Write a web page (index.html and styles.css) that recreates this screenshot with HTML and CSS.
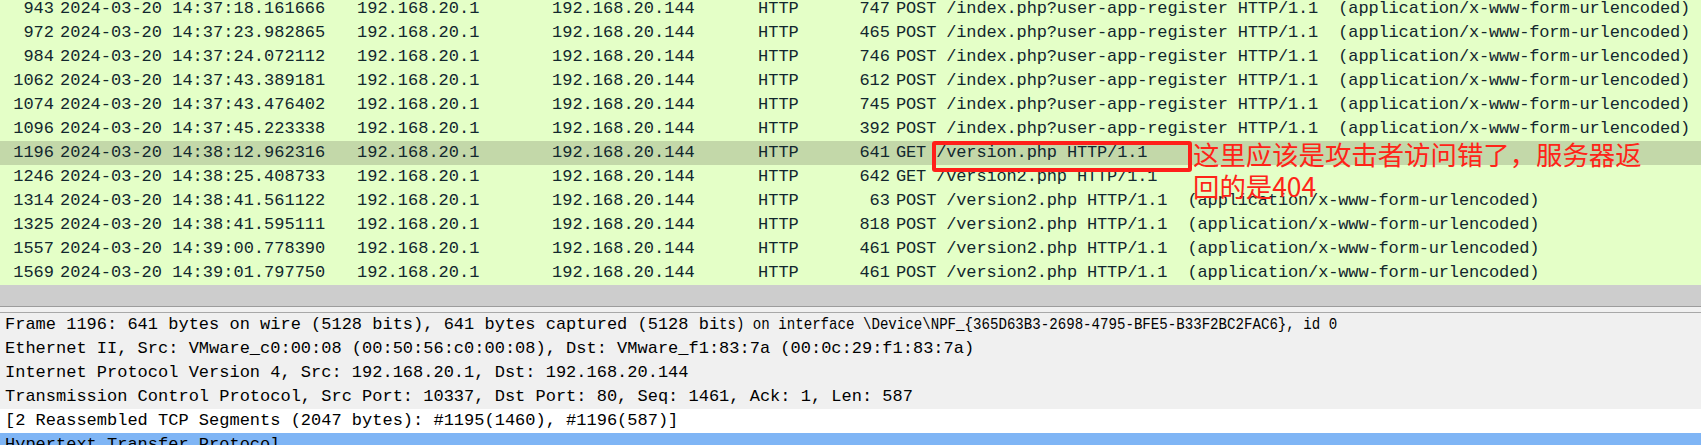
FILE: index.html
```html
<!DOCTYPE html>
<html lang="zh-CN">
<head>
<meta charset="utf-8">
<title>Wireshark</title>
<link rel="stylesheet" href="styles.css">
</head>
<body>
<div class="window">
  <div class="packet-list">
    <div class="rows">
      <div class="row"><span class="no">943</span><span class="time">2024-03-20 14:37:18.161666</span><span>192.168.20.1</span><span>192.168.20.144</span><span>HTTP</span><span class="len">747</span><span class="info">POST /index.php?user-app-register HTTP/1.1  (application/x-www-form-urlencoded)</span></div>
      <div class="row"><span class="no">972</span><span class="time">2024-03-20 14:37:23.982865</span><span>192.168.20.1</span><span>192.168.20.144</span><span>HTTP</span><span class="len">465</span><span class="info">POST /index.php?user-app-register HTTP/1.1  (application/x-www-form-urlencoded)</span></div>
      <div class="row"><span class="no">984</span><span class="time">2024-03-20 14:37:24.072112</span><span>192.168.20.1</span><span>192.168.20.144</span><span>HTTP</span><span class="len">746</span><span class="info">POST /index.php?user-app-register HTTP/1.1  (application/x-www-form-urlencoded)</span></div>
      <div class="row"><span class="no">1062</span><span class="time">2024-03-20 14:37:43.389181</span><span>192.168.20.1</span><span>192.168.20.144</span><span>HTTP</span><span class="len">612</span><span class="info">POST /index.php?user-app-register HTTP/1.1  (application/x-www-form-urlencoded)</span></div>
      <div class="row"><span class="no">1074</span><span class="time">2024-03-20 14:37:43.476402</span><span>192.168.20.1</span><span>192.168.20.144</span><span>HTTP</span><span class="len">745</span><span class="info">POST /index.php?user-app-register HTTP/1.1  (application/x-www-form-urlencoded)</span></div>
      <div class="row"><span class="no">1096</span><span class="time">2024-03-20 14:37:45.223338</span><span>192.168.20.1</span><span>192.168.20.144</span><span>HTTP</span><span class="len">392</span><span class="info">POST /index.php?user-app-register HTTP/1.1  (application/x-www-form-urlencoded)</span></div>
      <div class="row selected"><span class="no">1196</span><span class="time">2024-03-20 14:38:12.962316</span><span>192.168.20.1</span><span>192.168.20.144</span><span>HTTP</span><span class="len">641</span><span class="info">GET /version.php HTTP/1.1</span></div>
      <div class="row"><span class="no">1246</span><span class="time">2024-03-20 14:38:25.408733</span><span>192.168.20.1</span><span>192.168.20.144</span><span>HTTP</span><span class="len">642</span><span class="info">GET /version2.php HTTP/1.1</span></div>
      <div class="row"><span class="no">1314</span><span class="time">2024-03-20 14:38:41.561122</span><span>192.168.20.1</span><span>192.168.20.144</span><span>HTTP</span><span class="len">63</span><span class="info">POST /version2.php HTTP/1.1  (application/x-www-form-urlencoded)</span></div>
      <div class="row"><span class="no">1325</span><span class="time">2024-03-20 14:38:41.595111</span><span>192.168.20.1</span><span>192.168.20.144</span><span>HTTP</span><span class="len">818</span><span class="info">POST /version2.php HTTP/1.1  (application/x-www-form-urlencoded)</span></div>
      <div class="row"><span class="no">1557</span><span class="time">2024-03-20 14:39:00.778390</span><span>192.168.20.1</span><span>192.168.20.144</span><span>HTTP</span><span class="len">461</span><span class="info">POST /version2.php HTTP/1.1  (application/x-www-form-urlencoded)</span></div>
      <div class="row"><span class="no">1569</span><span class="time">2024-03-20 14:39:01.797750</span><span>192.168.20.1</span><span>192.168.20.144</span><span>HTTP</span><span class="len">461</span><span class="info">POST /version2.php HTTP/1.1  (application/x-www-form-urlencoded)</span></div>
    </div>
    <div class="mark-box"></div>
    <div class="mark-text">这里应该是攻击者访问错了，服务器返回的是404</div>
  </div>
  <div class="hscroll"></div>
  <div class="splitter"></div>
  <div class="details">
    <div class="item shaded">Frame 1196: 641 bytes on wire (5128 bits), 641 bytes captured (5128 bi<span class="squeeze">ts) on interface \Device\NPF_{365D63B3-2698-4795-BFE5-B33F2BC2FAC6}, id 0</span></div>
    <div class="item shaded">Ethernet II, Src: VMware_c0:00:08 (00:50:56:c0:00:08), Dst: VMware_f1:83:7a (00:0c:29:f1:83:7a)</div>
    <div class="item shaded">Internet Protocol Version 4, Src: 192.168.20.1, Dst: 192.168.20.144</div>
    <div class="item shaded">Transmission Control Protocol, Src Port: 10337, Dst Port: 80, Seq: 1461, Ack: 1, Len: 587</div>
    <div class="item">[2 Reassembled TCP Segments (2047 bytes): #1195(1460), #1196(587)]</div>
    <div class="item current">Hypertext Transfer Protocol</div>
  </div>
</div>
</body>
</html>
```
FILE: styles.css
```css
html, body {
  margin: 0;
  padding: 0;
  background: #ffffff;
  overflow: hidden;
}

.window {
  width: 1701px;
  height: 445px;
  overflow: hidden;
  font-family: "Liberation Mono", "DejaVu Sans Mono", monospace;
  font-size: 17px;
}

.packet-list {
  position: relative;
  height: 285px;
  overflow: hidden;
  background: #e4ffc7;
}

.rows {
  margin-top: -3px;
}

.row {
  display: grid;
  grid-template-columns: 54px 303px 195px 206px 80px 52px 1fr;
  height: 24px;
  line-height: 24px;
  color: #12272e;
  white-space: pre;
  background: #e4ffc7;
}

.row.selected {
  background: #c3d8a9;
}

.row span {
  overflow: hidden;
}

.no {
  text-align: right;
}

.time {
  padding-left: 6px;
}

.len {
  text-align: right;
}

.info {
  padding-left: 6px;
  letter-spacing: -0.15px;
}

.mark-box {
  position: absolute;
  left: 932px;
  top: 141px;
  width: 252px;
  height: 23px;
  border: 4px solid #ff1f1a;
  border-radius: 3px;
}

.mark-text {
  position: absolute;
  left: 1193px;
  top: 138px;
  width: 456px;
  font-family: "Noto Sans CJK SC", "Noto Sans", sans-serif;
  font-size: 26.4px;
  line-height: 32px;
  color: #ff2418;
}

.hscroll {
  height: 21px;
  background: #cdcdcd;
  border-bottom: 1px solid #9c9c9c;
}

.splitter {
  height: 5px;
  background: #f0f0f0;
  border-bottom: 1px solid #a8a8a8;
}

.details {
  background: #ffffff;
  color: #000000;
}

.item {
  height: 24px;
  line-height: 24px;
  padding-left: 5px;
  white-space: pre;
}

.item.shaded {
  background: #f0f0f0;
}

.item.current {
  background: #7fb5f5;
}

.squeeze {
  display: inline-block;
  transform: scaleX(0.83);
  transform-origin: left center;
}
```
